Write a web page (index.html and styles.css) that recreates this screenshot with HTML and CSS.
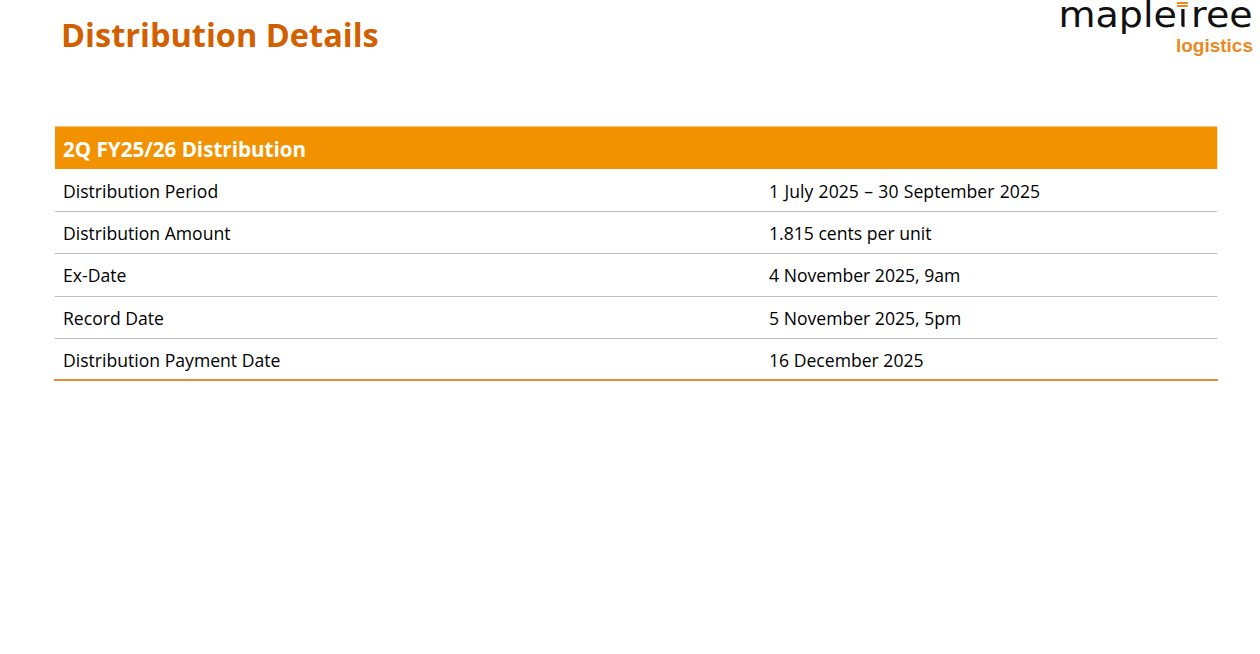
FILE: index.html
```html
<!DOCTYPE html>
<html lang="en">
<head>
<meta charset="utf-8">
<title>Distribution Details</title>
<link rel="stylesheet" href="styles.css">
</head>
<body>
<header class="top">
  <h1 class="title">Distribution Details</h1>
  <div class="logo">
    <div class="logo-main">maple<span class="logo-t">t</span>ree</div>
    <div class="logo-sub">logistics</div>
  </div>
</header>
<section class="dist">
  <h2 class="dist-head">2Q FY25/26 Distribution</h2>
  <div class="dist-rows">
    <div class="row"><span class="label">Distribution Period</span><span class="range">1 July 2025 – 30 September 2025</span></div>
    <div class="row"><span class="label">Distribution Amount</span><span>1.815 cents per unit</span></div>
    <div class="row"><span class="label">Ex-Date</span><span>4 November 2025, 9am</span></div>
    <div class="row"><span class="label">Record Date</span><span>5 November 2025, 5pm</span></div>
    <div class="row row-last"><span class="label">Distribution Payment Date</span><span>16 December 2025</span></div>
  </div>
</section>
</body>
</html>
```
FILE: styles.css
```css
* { box-sizing: border-box; }
html, body { margin: 0; background: #fff; }
body { width: 1260px; height: 654px; overflow: hidden; font-family: "Open Sans", "Noto Sans", sans-serif; color: #000; }
.top { display: flex; justify-content: space-between; align-items: flex-start; height: 127px; padding: 0 7px 0 61px; }
.title { margin: 14px 0 0; font-size: 32.5px; line-height: 42px; font-weight: 700; color: #d25f00; }
.logo { display: flex; flex-direction: column; align-items: flex-end; }
.logo-main { font-family: "DejaVu Sans", sans-serif; font-size: 35px; line-height: 30px; height: 36px; color: #111; transform: scaleX(1.087); transform-origin: right top; white-space: nowrap; }
.logo-t { position: relative; display: inline-block; width: 13px; color: transparent; }
.logo-t::before { content: ""; position: absolute; left: 0; width: 10px; top: 2px; height: 2px; background: #ea8a1c; box-shadow: 0 3px 0 #ea8a1c; }
.logo-t::after { content: ""; position: absolute; left: 3.5px; width: 3px; top: 9px; height: 18px; background: #111; border-radius: 0 0 0 2px; }
.logo-sub { font-family: "Liberation Sans", sans-serif; font-weight: 700; font-size: 19px; line-height: 20px; color: #e88a1f; }
.dist { margin-left: 55px; width: 1162px; font-size: 17.6px; }
.dist-head { margin: 0; height: 42px; padding: 2px 8px 0; display: flex; align-items: center; background: #f39200; color: #fff; font-size: 20.6px; font-weight: 700; box-shadow: 0 -1px 0 #f9c47c, 1px 0 0 #fde3bf; }
.dist-rows { padding-top: 1px; }
.row { display: flex; align-items: center; height: 42.2px; padding: 0.8px 8px 0; border-bottom: 1px solid #bdbdbd; }
.row-last { margin: 0 -1px; padding: 2px 9px 0; border-bottom: 2px solid #e08a3c; }
.label { width: 706px; flex: none; }
.range { word-spacing: 0.8px; }
```
